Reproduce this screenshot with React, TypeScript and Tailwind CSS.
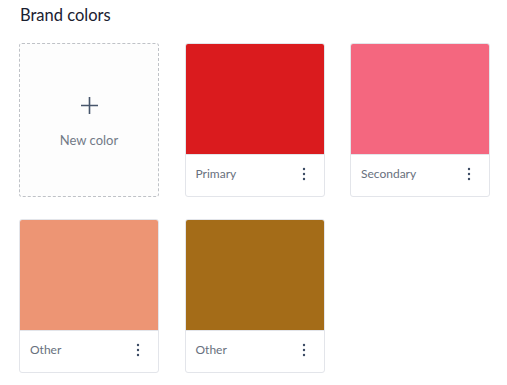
const colors = [
  { name: "Primary", hex: "#da1b1e" },
  { name: "Secondary", hex: "#f4677f" },
  { name: "Other", hex: "#ed9574" },
  { name: "Other", hex: "#a46c18" },
];

const Dots = () => (
  <svg width="4" height="14" viewBox="0 0 4 14" className="text-[#3b4a63]">
    <circle cx="2" cy="2" r="1.2" fill="currentColor" />
    <circle cx="2" cy="7" r="1.2" fill="currentColor" />
    <circle cx="2" cy="12" r="1.2" fill="currentColor" />
  </svg>
);

const ColorCard = ({ name, hex }: { name: string; hex: string }) => (
  <div className="h-[154px] flex flex-col border border-[#e3e5ea] rounded-[3px] overflow-hidden bg-white">
    <div className="h-[110px]" style={{ backgroundColor: hex }} />
    <div className="flex-1 flex items-center justify-between pl-[10px] pr-[18px] pb-[3px] border-t border-[#e3e5ea]">
      <span className="text-[12px] text-[#68707d]">{name}</span>
      <Dots />
    </div>
  </div>
);

export default function App() {
  return (
    <div className="min-h-screen bg-white px-[19px] pt-[3px] font-['Lato','Liberation_Sans',sans-serif]">
      <h2 className="text-[16.5px] font-normal text-[#1a2030] leading-[24px] mb-[16px] pl-px">
        Brand colors
      </h2>
      <div className="grid grid-cols-[140px_140px_140px] gap-x-[25.5px] gap-y-[22px]">
        <button
          type="button"
          className="h-[154px] flex flex-col items-center justify-center border border-dashed border-[#bfc2c7] rounded-[3px] bg-[#fdfdfd]"
        >
          <svg width="19" height="19" viewBox="0 0 19 19" className="mt-[4px] text-[#47566b]">
            <path d="M9.5 1v17M1 9.5h17" stroke="currentColor" strokeWidth="1.6" fill="none" />
          </svg>
          <span className="mt-[17px] text-[13px] leading-[16px] text-[#727a87]">New color</span>
        </button>
        {colors.map((c, i) => (
          <ColorCard key={i} name={c.name} hex={c.hex} />
        ))}
      </div>
    </div>
  );
}
